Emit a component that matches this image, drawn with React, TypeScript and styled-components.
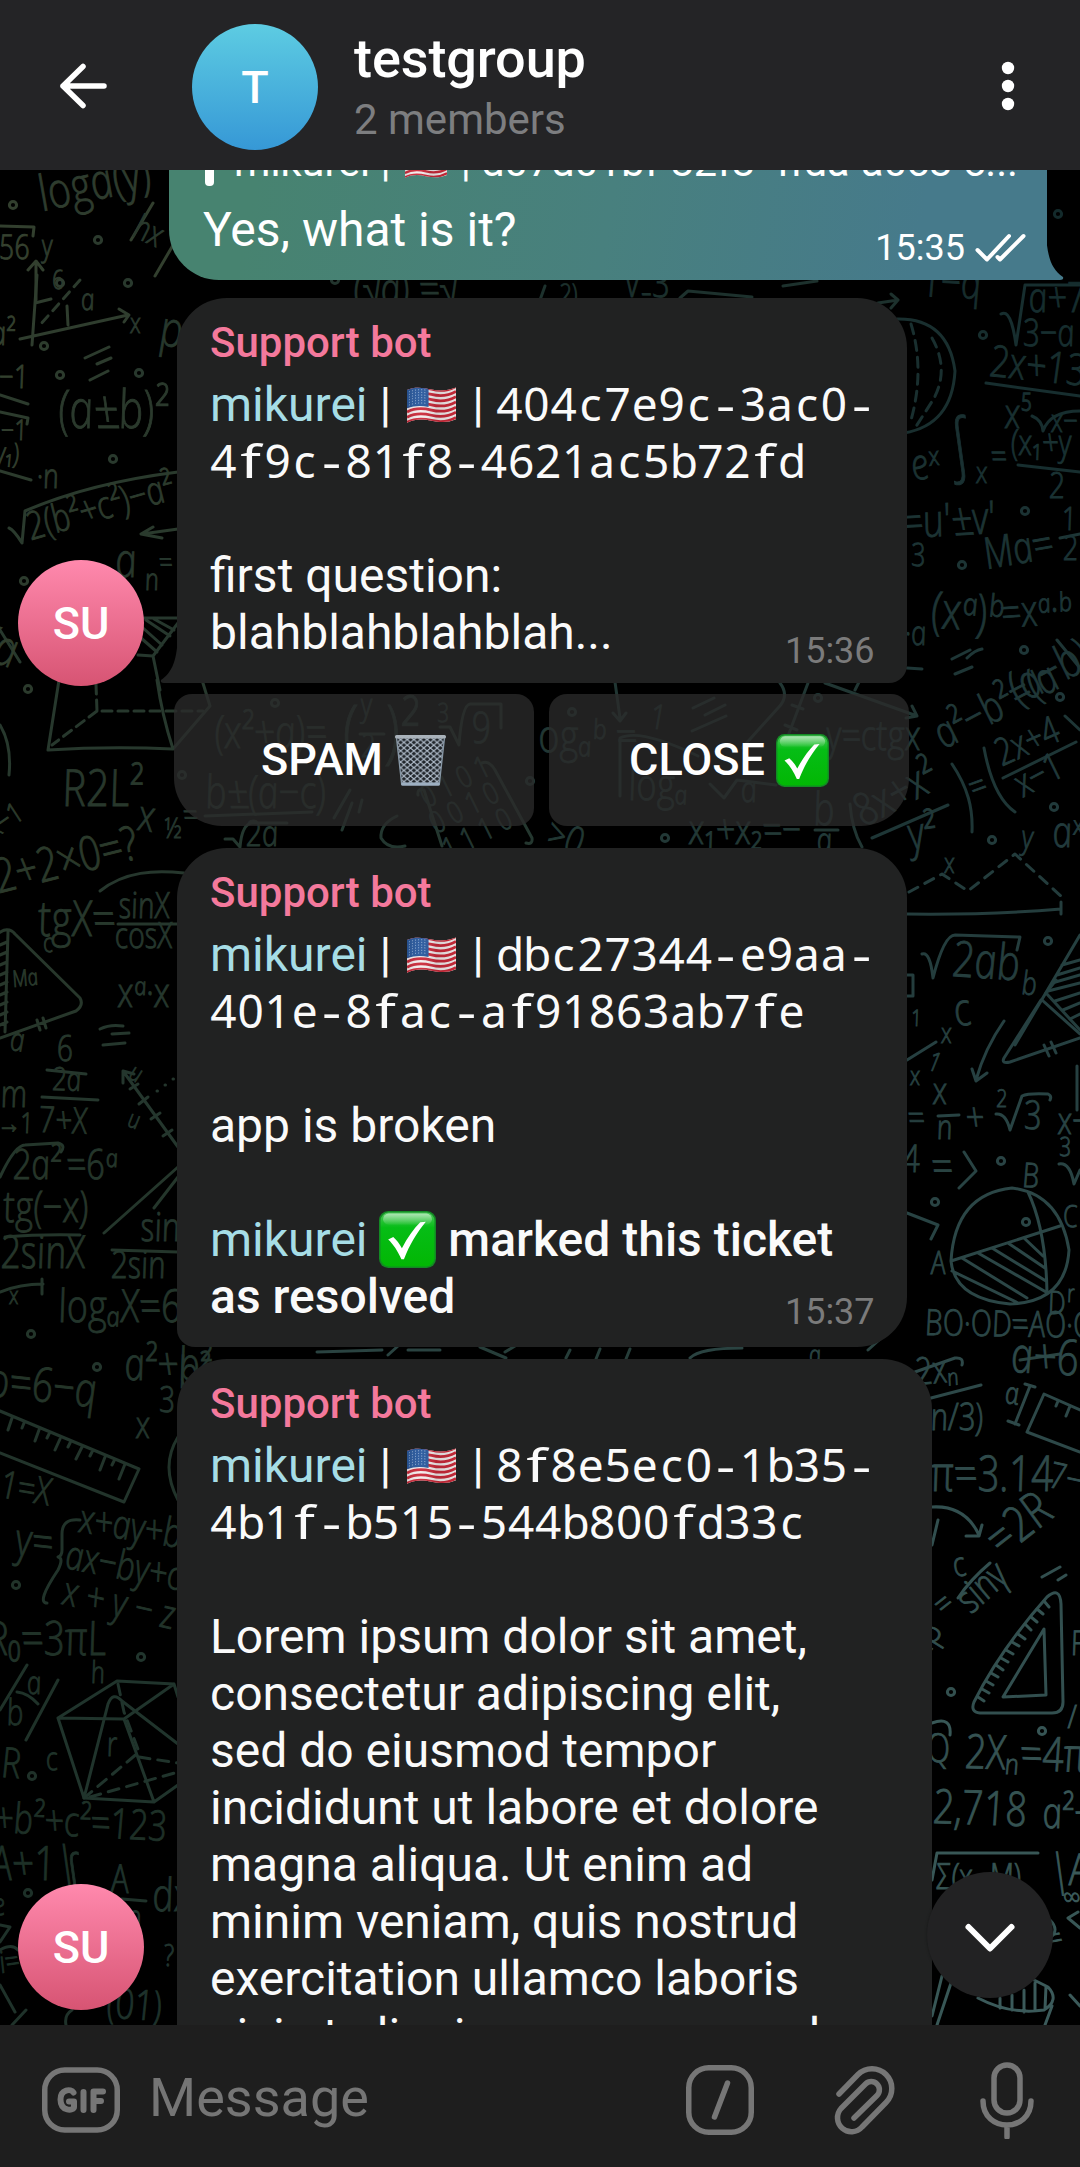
import React from 'react';
import styled, { createGlobalStyle, css } from 'styled-components';

const Global = createGlobalStyle`
  *, *::before, *::after { box-sizing: border-box; }
  body { margin: 0; background: #000; font-family: Roboto, "Noto Sans", sans-serif; }
`;

const Screen = styled.div`
  width: 1080px;
  height: 2167px;
  display: flex;
  flex-direction: column;
  overflow: hidden;
  background: #000;
  color: #fafafa;
`;

/* ---------- header ---------- */

const Header = styled.header`
  height: 170px;
  flex: none;
  display: flex;
  align-items: center;
  padding: 4px 60px 0 58px;
  background: #242426;
  position: relative;
  z-index: 2;
`;

const Avatar = styled.div<{ $from: string; $to: string }>`
  width: 126px;
  height: 126px;
  flex: none;
  border-radius: 50%;
  display: flex;
  align-items: center;
  justify-content: center;
  background: linear-gradient(${p => p.$from}, ${p => p.$to});
  color: #fff;
  font-weight: 500;
  font-size: 45px;
`;

const HeaderAvatar = styled(Avatar)`
  margin-left: 82px;
`;

const Titles = styled.div`
  flex: 1;
  margin: 0 0 0 36px;
  display: flex;
  flex-direction: column;
`;

const Title = styled.h1`
  margin: 0;
  font-size: 54px;
  font-weight: 500;
  line-height: 58px;
  letter-spacing: -0.1px;
  color: #fff;
`;

const Subtitle = styled.span`
  margin-top: 7px;
  font-size: 42px;
  line-height: 50px;
  color: #7d7e80;
`;

/* ---------- chat ---------- */

const Chat = styled.main`
  flex: 1;
  min-height: 0;
  position: relative;
  overflow: hidden;
  display: flex;
  flex-direction: column;
`;

const WallpaperSvg = styled.svg`
  position: absolute;
  inset: 0;
  font-family: "Open Sans", "Noto Sans", sans-serif;
  font-style: italic;
  font-weight: 300;
`;

const Row = styled.div<{ $gap?: number; $fill?: boolean }>`
  position: relative;
  display: flex;
  align-items: flex-end;
  margin-top: ${p => p.$gap ?? 0}px;
  padding-left: 18px;
  ${p => p.$fill ? css`flex: 1; min-height: 0; overflow: hidden;` : css`flex: none;`}
`;

const AvatarSlot = styled.div<{ $drop: number }>`
  width: 159px;
  flex: none;
  margin-bottom: ${p => p.$drop}px;
`;

const Bubble = styled.article<{ $width: number; $radius: string; $stretch?: boolean }>`
  position: relative;
  width: ${p => p.$width}px;
  border-radius: ${p => p.$radius};
  padding: 20px 33px 22px;
  background: #212222;
  ${p => p.$stretch && css`align-self: flex-start;`}
`;

const Sender = styled.div`
  font-size: 42px;
  font-weight: 500;
  line-height: 50px;
  margin-bottom: 8px;
  color: #f4799c;
`;

const Content = styled.div`
  display: grid;
  > * { grid-area: 1 / 1; }
`;

const Body = styled.div`
  font-size: 48px;
  line-height: 57px;
  white-space: pre;
`;

const Line = styled.div`
  height: 57px;
`;

const Mention = styled.span`
  color: #a6dde6;
`;

const Strong = styled.strong`
  font-weight: 500;
`;

const Time = styled.time<{ $drop: number }>`
  justify-self: end;
  align-self: end;
  margin-bottom: ${p => -p.$drop}px;
  font-size: 36px;
  line-height: 42px;
  color: #7b7b7b;
`;

const MonoCell = styled.span<{ $wide?: boolean }>`
  display: inline-block;
  width: 27.05px;
  text-align: center;
  font-family: "Noto Sans", sans-serif;
  font-size: 46px;
  line-height: 50px;
  ${p => p.$wide && css`transform: scaleX(1.3);`}
`;

const OutBubble = styled.article`
  position: relative;
  flex: none;
  width: 878px;
  height: 130px;
  margin: -20px 0 0 169px;
  padding: 0 21px 0 34px;
  border-bottom-left-radius: 50px;
  background: linear-gradient(100deg, #478370 10%, #48807e 50%, #467a8b 85%);
  display: flex;
  flex-direction: column;
`;

const Reply = styled.div`
  display: flex;
  align-items: flex-end;
  flex: none;
  height: 42px;
  padding-bottom: 6px;
`;

const ReplyBar = styled.span`
  width: 9px;
  height: 60px;
  margin: 0 20px 0 2px;
  border-radius: 4px;
  background: #fff;
`;

const ReplyText = styled.span`
  font-size: 41.5px;
  line-height: 50px;
  margin-bottom: -1px;
  white-space: pre;
  color: #fff;
`;

const OutLine = styled.div`
  display: flex;
  justify-content: space-between;
  height: 57px;
  margin-top: 9px;
  font-size: 48px;
  line-height: 57px;
  color: #fff;
`;

const OutMeta = styled.span`
  display: flex;
  align-items: center;
  gap: 10px;
  margin-top: 26px;
  height: 42px;
  font-size: 36px;
  line-height: 42px;
`;

const LeftTail = styled.svg`
  position: absolute;
  left: -17px;
  bottom: 0;
`;

const RightTail = styled.svg`
  position: absolute;
  right: -17px;
  bottom: 0;
`;

const Keyboard = styled.div`
  flex: none;
  display: flex;
  gap: 15px;
  margin: 11px 0 0 174px;
  position: relative;
`;

const KeyButton = styled.button<{ $radius: string }>`
  width: 360px;
  height: 132px;
  border: 0;
  padding: 0;
  border-radius: ${p => p.$radius};
  background: rgba(42, 42, 42, 0.78);
  color: #fff;
  font: 500 45px/132px Roboto, sans-serif;
  display: flex;
  align-items: center;
  justify-content: center;
  gap: 11px;
`;

const InlineIcon = styled.svg<{ $shift: number; $side?: number }>`
  vertical-align: ${p => p.$shift}px;
  margin: 0 ${p => p.$side ?? 0}px;
`;

const ScrollDown = styled.button`
  position: absolute;
  right: 27px;
  bottom: 27px;
  width: 126px;
  height: 126px;
  border: 0;
  padding: 5px 0 0;
  border-radius: 50%;
  background: #222223;
  box-shadow: 0 0 3px rgba(0, 0, 0, 0.35);
  display: flex;
  align-items: center;
  justify-content: center;
`;

/* ---------- composer ---------- */

const Composer = styled.footer`
  height: 142px;
  flex: none;
  display: flex;
  align-items: center;
  padding: 8px 43px 0 39px;
  background: #1e1e1e;
`;

const Placeholder = styled.span`
  flex: 1;
  margin-left: 26px;
  margin-top: -4px;
  font-size: 54px;
  line-height: 62px;
  color: #757575;
`;

const Tools = styled.div`
  display: flex;
  align-items: center;
  gap: 76px;
`;

const CommandIcon = styled.svg`
  margin-right: -3px;
`;

/* ---------- icons ---------- */

const Flag = ({ w = 51, shift = -3, side = 3.2 }: { w?: number; shift?: number; side?: number }) => {
  const wave = (y: number) => `M1 ${y + 3}C10 ${y - 2} 18 ${y - 1} 26 ${y + 1}S42 ${y + 3} 51 ${y - 2}`;
  return (
    <InlineIcon $shift={shift} $side={side} width={w} height={(w * 38) / 52} viewBox="0 0 52 38" role="img" aria-label="🇺🇸">
      <defs>
        <clipPath id="flagShape">
          <path d="M1 3C10 -1 18 1 26 2.500S42 4 51 0.500V33C42 37 34 36 26 34.500S10 32 1 36.500Z" />
        </clipPath>
        <linearGradient id="flagShade">
          <stop offset="0" stopColor="#000" stopOpacity=".12" />
          <stop offset=".3" stopColor="#fff" stopOpacity=".05" />
          <stop offset=".6" stopColor="#000" stopOpacity=".12" />
          <stop offset="1" stopColor="#000" stopOpacity=".05" />
        </linearGradient>
      </defs>
      <g clipPath="url(#flagShape)">
        <rect width="52" height="38" fill="#f5eeee" />
        {[0, 1, 2, 3, 4, 5, 6].map(i => (
          <path key={i} d={wave(1.300 + i * 5.300)} stroke="#cc2a3a" strokeWidth="2.800" fill="none" />
        ))}
        <path d="M0 0H23V20.500C15 18.500 8 19 0 22Z" fill="#28589d" />
        {[0, 1, 2, 3, 4, 5].map(r => (
          <path key={r} d={`M3 ${5 + r * 2.700}Q12 ${1.500 + r * 2.700} 22 ${3.500 + r * 2.700}`} stroke="#a9c3e2" strokeWidth="1" strokeDasharray="1 2.200" fill="none" />
        ))}
        <rect width="52" height="38" fill="url(#flagShade)" />
      </g>
    </InlineIcon>
  );
};

const CheckBox = ({ size, shift = 0 }: { size: number; shift?: number }) => (
  <InlineIcon $shift={shift} width={size} height={size} viewBox="0 0 56 56" role="img" aria-label="✅">
    <defs>
      <linearGradient id="checkFill" x2="0" y2="1">
        <stop offset="0" stopColor="#4fc85c" />
        <stop offset=".28" stopColor="#06bd16" />
        <stop offset="1" stopColor="#02b704" />
      </linearGradient>
      <linearGradient id="checkGloss" x2="0" y2="1">
        <stop offset="0" stopColor="#fff" stopOpacity=".55" />
        <stop offset="1" stopColor="#fff" stopOpacity=".05" />
      </linearGradient>
    </defs>
    <rect width="56" height="56" rx="9" fill="#138a24" />
    <rect x="1.500" y="1.500" width="53" height="53" rx="8" fill="url(#checkFill)" />
    <rect x="4" y="2.500" width="48" height="11" rx="5.500" fill="url(#checkGloss)" />
    <path d="M9 28L14 25.500C17.500 28.500 20 32 22.500 36.500C28 26 34 17.500 40.500 11L46 10.500C37 21.500 30 33 24.500 47.500H22C18.500 39.500 14 32.500 9 28Z" fill="#fff" />
  </InlineIcon>
);

const Basket = () => (
  <svg width="53" height="53" viewBox="0 0 52 52" role="img" aria-label="🗑️">
    <defs>
      <pattern id="mesh" width="6.500" height="5.500" patternUnits="userSpaceOnUse">
        <path d="M0 0L6.500 5.500M6.500 0L0 5.500" stroke="#b4c0ce" strokeWidth="1.100" />
      </pattern>
    </defs>
    <path d="M2.500 3H49.500L44.500 50H7.500Z" fill="#20252a" />
    <path d="M2.500 3H49.500L44.500 50H7.500Z" fill="url(#mesh)" />
    <path d="M2.500 4L7.500 49M49.500 4L44.500 49" stroke="#8797a5" strokeWidth="1.300" />
    <rect x="1" y="1" width="50" height="3.400" rx="1.500" fill="#a9b2ba" />
    <rect x="7" y="47.500" width="38" height="3.200" rx="1.500" fill="#9eb0c2" />
  </svg>
);

/* ---------- fixed-pitch ids ---------- */

const Mono = ({ children }: { children: string }) => (
  <>
    {children.split('').map((c, i) => <MonoCell key={i} $wide={c === 'f' || c === '-'}>{c}</MonoCell>)}
  </>
);

/* ---------- wallpaper ---------- */

type Scribble = [number, number, number, number, string];

const formulas: Scribble[] = [
  [44, 211, 52, -12, 'loga(y)'], [0, 259, 36, 0, '56'], [43, 256, 32, 0, 'y'], [132, 236, 36, 25, 'hx'],
  [53, 289, 28, 0, '6'], [-8, 345, 36, 0, 'a²'], [82, 310, 32, 0, 'a'], [131, 333, 30, 0, 'x'], [160, 345, 52, 8, 'p'],
  [0, 388, 34, 0, '−1'], [2, 440, 30, 0, '−1'], [-4, 462, 30, 4, 'y₁)'], [38, 488, 36, 0, '·n'],
  [60, 428, 56, 0, '(a±b)²'], [32, 540, 41, -16, '2(b²+c²)−a²'], [117, 577, 50, 0, 'a'], [146, 590, 32, 0, 'n'], [160, 572, 30, 0, '='],
  [-18, 658, 52, 20, '(a'], [64, 806, 54, 0, 'R2L²'], [138, 830, 46, 8, 'x'], [165, 838, 30, 0, '½'], [184, 826, 34, 0, '='],
  [0, 893, 50, -14, '2+2×0=?'], [-4, 838, 30, -35, 'x−1'], [40, 936, 52, 0, 'tgX='], [120, 918, 38, 0, 'sinX'], [116, 948, 38, 0, 'cosX'],
  [14, 987, 24, -6, 'Ma'], [44, 952, 28, 0, 'c'], [119, 1007, 44, 0, 'xᵃ·x'],
  [216, 748, 48, 0, '(x²+a)='], [345, 755, 74, 0, '('], [362, 716, 34, 0, 'y'], [362, 757, 34, 0, '2'], [388, 755, 74, 0, ')²'], [438, 722, 28, 0, '3'], [473, 743, 46, 0, '9'],
  [207, 808, 48, 0, 'b±(a−c)'], [247, 846, 38, 0, '2a'], [428, 808, 32, -28, '0 1 0 1'], [437, 834, 32, -28, '0 0 1 0'], [450, 860, 32, -28, '1 1 1 0'],
  [540, 752, 48, 0, 'ogₐᵇ ='], [650, 728, 36, 8, '1'], [630, 800, 46, 0, 'logₐ'], [742, 802, 38, 0, 'a'], [815, 825, 48, 0, 'b'],
  [828, 750, 44, 0, 'y=ctgx'], [690, 844, 44, 0, 'x₁+x₂=−'], [818, 852, 36, 0, 'a'], [545, 845, 42, 20, '>0'],
  [10, 1050, 34, 8, 'a'], [58, 1061, 38, 0, '6'], [53, 1090, 34, 2, '2a'], [-12, 1107, 40, 0, 'lim'], [-2, 1133, 30, 0, '→1'], [40, 1132, 38, 2, '7+X'],
  [128, 1078, 26, 30, 'u'], [127, 1126, 26, 20, 'u'], [14, 1179, 44, 0, '2a²'], [68, 1179, 44, 0, '=6ᵃ'],
  [5, 1222, 46, 0, 'tg(−x)'], [2, 1268, 48, 0, '2sinX'], [142, 1241, 42, 0, 'sin'], [112, 1278, 40, 0, '2sin'],
  [10, 1304, 26, 0, 'x'], [60, 1322, 48, 0, 'logₐX=6'], [-12, 1338, 38, 0, 'c'], [-12, 1396, 50, 6, 'ρ=6−q'], [126, 1380, 48, 0, 'a²+b²'],
  [160, 1412, 38, 0, '3'], [137, 1438, 40, 0, 'x'], [0, 1497, 40, 10, '1=X'], [16, 1555, 48, 6, 'y='],
  [79, 1532, 42, 9, 'x+ay+b'], [65, 1568, 42, 11, 'ax−by+c'], [62, 1604, 42, 13, 'x + y − z'], [-12, 1655, 50, 0, 'R₀=3πL'],
  [92, 1683, 32, 0, 'h'], [28, 1694, 34, 0, 'a'], [8, 1725, 38, 0, 'b'], [108, 1756, 36, 0, 'r'], [2, 1777, 44, 4, 'R'], [47, 1770, 34, 0, 'c'],
  [-5, 1832, 44, 3, '+b²+c²=123'], [-8, 1880, 50, 0, 'A+1|'], [70, 1895, 60, 0, '∫'], [112, 1893, 42, 0, 'A'], [128, 1928, 34, 0, 'n'], [154, 1911, 48, 0, 'dx'],
  [-6, 1915, 32, 0, 'e'], [2, 1973, 32, -8, 'i='], [88, 2016, 44, 4, '−(01)'], [165, 1966, 32, 0, '?'],
  [355, 304, 46, 0, '(√a) =√'], [560, 304, 30, 0, '2)'], [625, 297, 42, 0, 'V₋3'], [922, 296, 46, 3, '1−q'], [1030, 312, 44, 0, 'a+7'], [1024, 346, 40, 0, '3−a'],
  [990, 376, 46, 6, '2x+13'], [1006, 428, 44, 0, 'x⁵'], [1052, 432, 34, 0, 'x−'], [1012, 455, 38, 0, '(x₁+y'], [1050, 498, 38, 0, '2'], [914, 480, 46, -6, 'eˣ'],
  [955, 468, 74, 0, '∫'], [977, 483, 32, 0, 'x'], [992, 468, 36, 0, '='], [904, 538, 48, -3, "=u'±v'"], [912, 566, 34, 0, '3'], [988, 569, 46, -10, 'Ma='],
  [1063, 530, 34, 0, '1'], [1064, 560, 36, 0, '2'], [932, 628, 54, 3, '(xᵃ)ᵇ'], [1003, 628, 46, -4, '=xᵃ·ᵇ'], [906, 645, 36, 0, '·a'], [1020, 705, 50, -28, '(a−b)'],
  [945, 749, 46, -28, 'a²−b²=(a'], [1003, 766, 40, -24, '2x+4'], [1024, 797, 40, -28, 'x−1'], [975, 800, 38, -20, '='], [865, 827, 48, -28, '8x+x²'], [912, 850, 48, -8, 'y²'],
  [945, 873, 30, 0, 'x'], [1022, 848, 34, 6, 'y'], [1054, 847, 46, 0, 'aˣ'], [953, 976, 52, 4, '2ab'], [1022, 994, 34, 6, 'b'], [957, 1026, 48, -6, 'c'],
  [912, 1026, 24, 0, '1'], [942, 1043, 30, 0, 'x'], [927, 1069, 28, 20, '1'], [911, 1085, 28, 0, 'x'], [934, 1104, 40, 0, 'x'], [938, 1139, 36, 0, 'n'], [909, 1130, 38, 0, '='], [967, 1131, 42, 0, '+'],
  [997, 1107, 26, 0, '2'], [1025, 1129, 42, 0, '3'], [1059, 1134, 40, 0, 'x−'], [904, 1172, 40, 0, '4'], [933, 1182, 48, 0, '='], [1060, 1156, 28, 0, '3'],
  [1023, 1187, 36, 3, 'B'], [932, 1274, 34, 0, 'A'], [1064, 1227, 32, 0, 'C'], [1049, 1314, 34, 0, 'D'], [1068, 1302, 26, 0, 'r'],
  [926, 1335, 38, 1, 'BO·OD=AO·OC'], [1012, 1372, 52, 3, 'a+6'], [918, 1385, 40, -6, '2xₙ'], [1005, 1403, 32, 8, 'ɑ'], [932, 1430, 40, 0, 'n/3)'],
  [932, 1491, 52, 0, 'π=3.14'], [1049, 1487, 38, 12, '7−'], [1003, 1557, 52, -38, '=2R'], [956, 1577, 36, -10, 'c'], [972, 1614, 42, -42, 'sinγ'], [945, 1617, 36, -38, '='],
  [926, 1660, 40, -60, 'nβ'], [928, 1762, 42, 0, 'Q'], [966, 1768, 50, 2, '2Xₙ=4π'], [934, 1823, 50, 2, '2,718'], [1044, 1828, 46, 0, 'a²+'],
  [937, 1889, 38, 0, 'Σ(x−M)'], [1051, 1885, 46, 0, '|A'], [1064, 1908, 32, 0, '∞'], [1050, 1950, 34, -10, '='], [1072, 1655, 36, 0, 'F'], [1069, 1728, 34, 0, '/'],
  [810, 1364, 28, 0, 'a'], [180, 1388, 46, 0, 'b²'],
];

type Stroke = [number, number, string, string?];

const strokes: Stroke[] = [
  [10, 230, 'M0 226L34 227L33 236M36 300V262M28 270L36 261L43 270M153 203L131 240M176 240L155 276'],
  [30, 300, 'M37 275L32 345M20 339L128 315M119 309L129 315L124 322M67 306L68 325M35 303L51 299'],
  [60, 300, 'M80 280L40 325', '9 7'],
  [60, 370, 'M85 358L109 347M97 364L111 358M90 380L108 371M0 395L28 404M0 412L28 418L27 424M0 471L31 480'],
  [60, 520, 'M9 528Q14 530 22 543L25 511Q90 483 178 472M178 529L142 534M153 527L141 534L162 538'],
  [150, 640, 'M144 618H180M138 655L153 656L178 623M153 656L160 690M146 620L170 636M154 619L174 630M143 628L162 645M141 638L157 652'],
  [100, 710, 'M59 680L48 750Q110 746 173 749Q162 715 157 680M173 749L210 706L202 680M0 725Q12 745 9 775M0 630L20 662'],
  [100, 710, 'M96 684L97 711H203M97 711L52 745', '10 6'],
  [100, 890, 'M100 891C125 871 155 870 184 873M118 924H178'],
  [30, 980, 'M-4 935Q8 925 15 934L80 998Q84 1005 76 1011L0 1038M8 932L5 1032M37 1020L40 1030M43 1018L46 1028M0 945L7 942M0 955L7 952M0 965L7 962M0 975L7 972M0 985L7 982M0 995L7 992M0 1005L7 1002M0 1015L7 1012M0 1025L7 1022'],
  [110, 1030, 'M100 1029Q110 1024 123 1026M112 1034L129 1033M103 1045L125 1043M47 1070L86 1074M42 1097L98 1100'],
  [140, 1110, 'M178 1147L123 1071V1083M123 1071L134 1074M130 1089L138 1084M139 1104L148 1097M151 1119L160 1113M163 1136L172 1130M157 1091l.5 0M165 1085l.5 0M173 1079l.5 0'],
  [60, 1200, 'M0 1177Q15 1145 25 1145L58 1143Q66 1145 61 1152M5 1237Q40 1234 80 1235M104 1233L178 1167M154 1208L178 1177M112 1250L178 1252M0 1292Q20 1284 43 1284M42 1279V1294'],
  [60, 1450, 'M0 1411L139 1469L124 1502L0 1453M12 1418L8 1430M24 1423L22 1428M39 1430L35 1441M49 1434L47 1438M60 1439L55 1450M70 1443L68 1447M82 1447L76 1459M92 1452L90 1456M105 1457L100 1470M114 1461L112 1465M125 1464L119 1479'],
  [60, 1560, 'M80 1520Q62 1518 62 1534V1550Q62 1556 58 1557Q64 1558 58 1570Q36 1603 47 1603M178 1437Q160 1466 178 1500'],
  [30, 1700, 'M0 1710L27 1665M58 1680L26 1740M17 1692Q28 1693 38 1704'],
  [110, 1740, 'M58 1718L117 1681L174 1684L178 1697M58 1718L124 1719L174 1684M58 1718L84 1798L154 1802L178 1785M124 1719L154 1802M84 1798L108 1704Q113 1691 122 1701L178 1744'],
  [110, 1760, 'M118 1684L124 1712L139 1752L84 1798M139 1757L178 1763M90 1797L178 1772', '11 8'],
  [80, 1900, 'M122 1899L146 1901M0 1925L10 1927L0 1942M0 1950Q12 1943 18 1950M0 1985L15 2012M12 2025L26 2010M66 2025Q64 2015 72 2010'],
  [250, 820, 'M205 816L312 812M225 839L233 839L240 847Q242 824 252 823L287 823M360 734H384M440 727L450 727L459 745Q462 705 470 704H501V728M418 795Q417 788 424 790L442 846M482 763Q489 760 495 770L532 838Q533 845 526 843'],
  [350, 810, 'M350 790L334 818M352 803L342 830M362 800L359 812M397 816Q380 824 381 838Q388 850 405 846'],
  [620, 720, 'M615 682L620 718M613 713L620 721L626 713M693 708L714 698M705 715L725 705M692 731L726 716M780 683Q790 696 778 708L742 748M808 683L788 736M785 725L797 730M792 705L803 709M620 796V738Q640 728 698 756M710 784L724 798L737 780L776 785M825 683L917 716L912 706M917 716L906 718M855 690L860 680M815 830H838M850 804Q852 830 862 847'],
  [560, 290, 'M680 298L688 291L752 297M783 286L817 281M878 303L898 300L891 294M898 300L891 308M540 300L545 286'],
  [930, 370, 'M897 319Q948 318 955 371Q952 425 904 433'],
  [930, 370, 'M911 324Q925 370 911 420M932 338Q950 370 933 400L915 428', '10 7'],
  [1030, 370, 'M1001 314Q1011 308 1016 345L1025 285H1080M986 383L1080 396M1032 416Q1042 420 1043 431Q1050 411 1080 411M1018 465L1080 472'],
  [970, 660, 'M952 659L970 650M967 658Q975 650 982 649M955 674L972 667M907 668L922 669M1060 538L1080 534M984 748Q993 797 1015 812M952 764C968 788 973 808 972 832M1003 778L1076 742M872 838L948 805M1065 716L1080 730M1057 640L1080 668'],
  [990, 880, 'M909 892L942 874L968 891L1015 854L1062 897', '10 8'],
  [990, 920, 'M907 914Q990 915 1061 909M1061 902V914M922 954Q930 951 933 978Q944 935 955 935L1020 937L1017 950M907 975H913V996H907M1080 1030L1046 993L1056 980'],
  [1040, 1000, 'M1080 935L1015 1045M1062 965L1080 960M1057 975L1080 968M1052 983L1080 975M1048 991L1080 983M1055 1001L1080 993M1063 1010L1080 1003M1070 1019L1080 1014'],
  [1000, 1050, 'M1004 1021Q985 1048 976 1080M972 1069L976 1081L987 1073M907 1060L936 1042M1041 1000L1004 1058Q1001 1064 1010 1062L1080 1038M1042 1000L1080 1034M1044 1045L1049 1056M1051 1042L1056 1053M1077 1066V1110'],
  [1000, 1130, 'M938 1116L959 1115M996 1114Q1006 1113 1010 1130L1022 1096Q1028 1093 1048 1094Q1052 1096 1050 1100M964 1152L976 1171L959 1188M1059 1164Q1070 1162 1074 1184L1080 1170M907 1213L938 1225L931 1239'],
  [1010, 1250, 'M1012 1188Q1060 1194 1069 1250Q1066 1302 1010 1304Q955 1299 951 1261Q955 1194 1012 1188ZM951 1261L1060 1226M1028 1192Q1046 1230 1047 1293M962 1258L1027 1298M978 1253L1046 1292M992 1248L1046 1281M1008 1243L1045 1268M1024 1238L1043 1256M952 1271L1018 1303'],
  [960, 1380, 'M915 1372L955 1358Q964 1357 962 1365M931 1398L981 1385M1025 1384L1035 1387M1030 1386L1015 1424M1008 1421L1019 1425M1080 1410L1044 1394L1027 1432L1080 1452M1058 1401L1056 1406M1070 1406L1066 1416'],
  [1000, 1600, 'M932 1507Q965 1505 979 1535M966 1536L979 1536L982 1525M938 1520L932 1545M958 1598Q970 1580 990 1563M1042 1577L1060 1567M1058 1580L1066 1575M1047 1597Q1060 1586 1061 1604L1063 1702Q1063 1713 1052 1713H980Q970 1712 974 1702Q1000 1650 1047 1597ZM1044 1629L1046 1695L1003 1697Z'],
  [1010, 1680, 'M1044 1601L1049 1607M1037 1609L1043 1614M1031 1617L1037 1622M1025 1624L1031 1630M1018 1634L1025 1639M1012 1642L1019 1646M1006 1650L1013 1654M1001 1658L1008 1662M996 1665L1003 1670M991 1673L998 1677M986 1681L993 1685M982 1689L989 1693M978 1697L984 1701'],
  [1000, 1890, 'M932 1723Q952 1716 950 1735M932 1880L937 1853H1038M932 2016L942 1976M937 2025L951 1983M1050 1920Q1060 1930 1050 1938M1078 1912L1068 1918L1080 1928'],
  [1020, 1990, 'M978 1998Q1010 2015 1044 2010Q1060 2000 1048 1987L1030 1978M1000 1998V2008M1012 1995V2010M1024 1990V2012M1035 1983V2011M1046 1986L1045 2009M1052 2006L1045 2025M1070 1995L1080 2006'],
  [780, 1352, 'M317 1352L382 1350M388 1355L398 1346M408 1350H440M690 1358Q700 1348 742 1348M890 1330L868 1350M1020 1360L1060 1354'],
  [520, 1352, 'M480 1347L506 1358M505 1352L515 1346M570 1350L566 1358M600 1349L596 1359M630 1349L626 1359'],
];

const rings: [number, number][] = [
  [13, 205], [98, 240], [128, 283], [60, 283], [44, 346], [60, 375], [139, 373], [113, 459], [24, 581], [28, 689], [182, 775], [275, 703], [530, 781],
  [31, 1334], [97, 1367], [16, 1585], [141, 1657], [32, 1776], [28, 1893], [335, 280], [983, 335], [1025, 511], [962, 565], [1024, 650], [1060, 697],
  [1054, 807], [572, 712], [665, 838], [992, 840], [1048, 941], [1001, 1161], [935, 1202], [1026, 1222], [951, 1692], [1042, 1731], [818, 698], [1058, 214],
];

const corners = { tl: [54, 66, 47], tr: [18, 40, 42], bl: [27, 46, 38], br: [62, 94, 94] };

const chalk = (x: number, y: number) => {
  const u = Math.min(1, Math.max(0, x / 1080));
  const v = Math.min(1, Math.max(0, (y - 170) / 1855));
  const mix = [0, 1, 2].map(i => {
    const top = corners.tl[i] + (corners.tr[i] - corners.tl[i]) * Math.sqrt(u);
    const bottom = corners.bl[i] + (corners.br[i] - corners.bl[i]) * u;
    return Math.round(top + (bottom - top) * v);
  });
  return `rgb(${mix.join(',')})`;
};

const Wallpaper = () => (
  <WallpaperSvg width="1080" height="1855" viewBox="0 170 1080 1855" aria-hidden="true">
    <g fill="none" strokeWidth="3" strokeLinecap="round" strokeLinejoin="round">
      {strokes.map(([x, y, d, dash], i) => <path key={i} d={d} stroke={chalk(x, y)} strokeDasharray={dash} />)}
      {rings.map(([x, y], i) => <circle key={i} cx={x} cy={y} r="3.600" stroke={chalk(x, y)} />)}
    </g>
    {formulas.map(([x, y, size, rot, text], i) => (
      <text
        key={i}
        fill={chalk(x, y)}
        stroke={chalk(x, y)}
        strokeWidth="0.900"
        fontSize={size * 0.95}
        transform={`translate(${x} ${y}) rotate(${rot}) skewX(8) scale(.82 1)`}
      >
        {text}
      </text>
    ))}
  </WallpaperSvg>
);

/* ---------- messages ---------- */

const TicketHead = ({ first, second }: { first: string; second: string }) => (
  <>
    <Line><Mention>mikurei</Mention> | <Flag /> | <Mono>{first}</Mono></Line>
    <Line><Mono>{second}</Mono></Line>
    <Line />
  </>
);

const BotAvatar = () => <Avatar $from="#ff89ad" $to="#d75473">SU</Avatar>;

const lorem = [
  'Lorem ipsum dolor sit amet,',
  'consectetur adipiscing elit,',
  'sed do eiusmod tempor',
  'incididunt ut labore et dolore',
  'magna aliqua. Ut enim ad',
  'minim veniam, quis nostrud',
  'exercitation ullamco laboris',
  'nisi ut aliquip ex ea commodo',
];

export default function App() {
  return (
    <Screen>
      <Global />
      <Header>
        <svg width="52" height="52" viewBox="0 0 52 52" fill="none" stroke="#fff" strokeWidth="5.500" strokeLinecap="round" strokeLinejoin="round">
          <path d="M25 5.500L5 25L25 44.500M5 25H46" />
        </svg>
        <HeaderAvatar $from="#5dcce2" $to="#3698d6">T</HeaderAvatar>
        <Titles>
          <Title>testgroup</Title>
          <Subtitle>2 members</Subtitle>
        </Titles>
        <svg width="24" height="54" viewBox="0 0 24 54" fill="#fff">
          <circle cx="12" cy="8" r="6.200" /><circle cx="12" cy="26" r="6.200" /><circle cx="12" cy="44" r="6.200" />
        </svg>
      </Header>

      <Chat>
        <Wallpaper />

        <OutBubble>
          <Reply>
            <ReplyBar />
            <ReplyText>mikurei | <Flag w={44} shift={-3} side={2.8} /> | d07d01bf-82f8-4fda-a0c8-c...</ReplyText>
          </Reply>
          <OutLine>
            Yes, what is it?
            <OutMeta>
              15:35
              <svg width="51" height="30" viewBox="0 0 51 30" fill="none" stroke="#fff" strokeWidth="4" strokeLinecap="round" strokeLinejoin="round">
                <path d="M2.500 17L12 26.500L34 3M22.500 24L25 26.500L48.500 3" />
              </svg>
            </OutMeta>
          </OutLine>
          <RightTail width="18" height="48" viewBox="0 0 18 48">
            <path d="M0 0C1 24 5 37 17 45Q18 48 14 48H0Z" fill="#467a8b" />
          </RightTail>
        </OutBubble>

        <Row $gap={18}>
          <AvatarSlot $drop={-3}><BotAvatar /></AvatarSlot>
          <Bubble $width={730} $radius="50px 50px 18px 0">
            <Sender>Support bot</Sender>
            <Content>
              <Body>
                <TicketHead first="404c7e9c-3ac0-" second="4f9c-81f8-4621ac5b72fd" />
                <Line>first question:</Line>
                <Line>blahblahblahblah...</Line>
              </Body>
              <Time $drop={11}>15:36</Time>
            </Content>
            <LeftTail width="18" height="48" viewBox="0 0 18 48">
              <path d="M18 0C17 24 13 37 1 45Q0 48 4 48H18Z" fill="#212222" />
            </LeftTail>
          </Bubble>
        </Row>

        <Keyboard>
          <KeyButton $radius="18px 18px 18px 48px">SPAM <Basket /></KeyButton>
          <KeyButton $radius="18px 18px 48px 18px">CLOSE <CheckBox size={53} /></KeyButton>
        </Keyboard>

        <Row $gap={22}>
          <AvatarSlot $drop={0} />
          <Bubble $width={730} $radius="50px 50px 50px 18px">
            <Sender>Support bot</Sender>
            <Content>
              <Body>
                <TicketHead first="dbc27344-e9aa-" second="401e-8fac-af91863ab7fe" />
                <Line>app is broken</Line>
                <Line />
                <Line><Mention>mikurei</Mention> <CheckBox size={57} shift={-12} /> <Strong>marked this ticket</Strong></Line>
                <Line><Strong>as resolved</Strong></Line>
              </Body>
              <Time $drop={8}>15:37</Time>
            </Content>
          </Bubble>
        </Row>

        <Row $gap={12} $fill>
          <AvatarSlot $drop={15}><BotAvatar /></AvatarSlot>
          <Bubble $width={755} $radius="50px 50px 0 0" $stretch>
            <Sender>Support bot</Sender>
            <Body>
              <TicketHead first="8f8e5ec0-1b35-" second="4b1f-b515-544b800fd33c" />
              {lorem.map(line => <Line key={line}>{line}</Line>)}
            </Body>
          </Bubble>
        </Row>

        <ScrollDown aria-label="Scroll to bottom">
          <svg width="54" height="32" viewBox="0 0 54 32" fill="none" stroke="#fff" strokeWidth="6" strokeLinecap="round" strokeLinejoin="round">
            <path d="M5.500 5L27 26.500L48.500 5" />
          </svg>
        </ScrollDown>
      </Chat>

      <Composer>
        <svg width="84" height="72" viewBox="0 0 84 72" fill="none" stroke="#767676" strokeWidth="5.500" strokeLinecap="round" strokeLinejoin="round">
          <rect x="5.750" y="6" width="72.500" height="60" rx="20" />
          <path strokeWidth="6" d="M34.500 28.500C32 24.500 21.500 25 21.500 35.500C21.500 48 35 47 35 43V37.500H30M44.500 28V46M54.500 46V27.500H64M54.500 37H62" />
        </svg>
        <Placeholder>Message</Placeholder>
        <Tools>
          <CommandIcon width="72" height="72" viewBox="0 0 72 72" fill="none" stroke="#767676" strokeWidth="5.500" strokeLinecap="round">
            <rect x="4.750" y="3.750" width="62.500" height="64.500" rx="20" />
            <path d="M43.500 19L30.500 53" />
          </CommandIcon>
          <svg width="72" height="72" viewBox="0 0 72 72" fill="none" stroke="#767676" strokeWidth="5.500" strokeLinecap="round" strokeLinejoin="round">
            <path d="M10 30L29 10.500A19.500 19.500 0 0 1 57 38.500L33 63A13.500 13.500 0 0 1 12 44.500L36.500 20A8 8 0 0 1 48 31.500L25 54" />
          </svg>
          <svg width="60" height="78" viewBox="0 0 60 78" fill="none" stroke="#767676" strokeWidth="5.500" strokeLinecap="round">
            <rect x="17" y="4" width="26" height="48" rx="13" />
            <path d="M6 40C6 72 54 72 54 40M30 65V76" />
          </svg>
        </Tools>
      </Composer>
    </Screen>
  );
}
